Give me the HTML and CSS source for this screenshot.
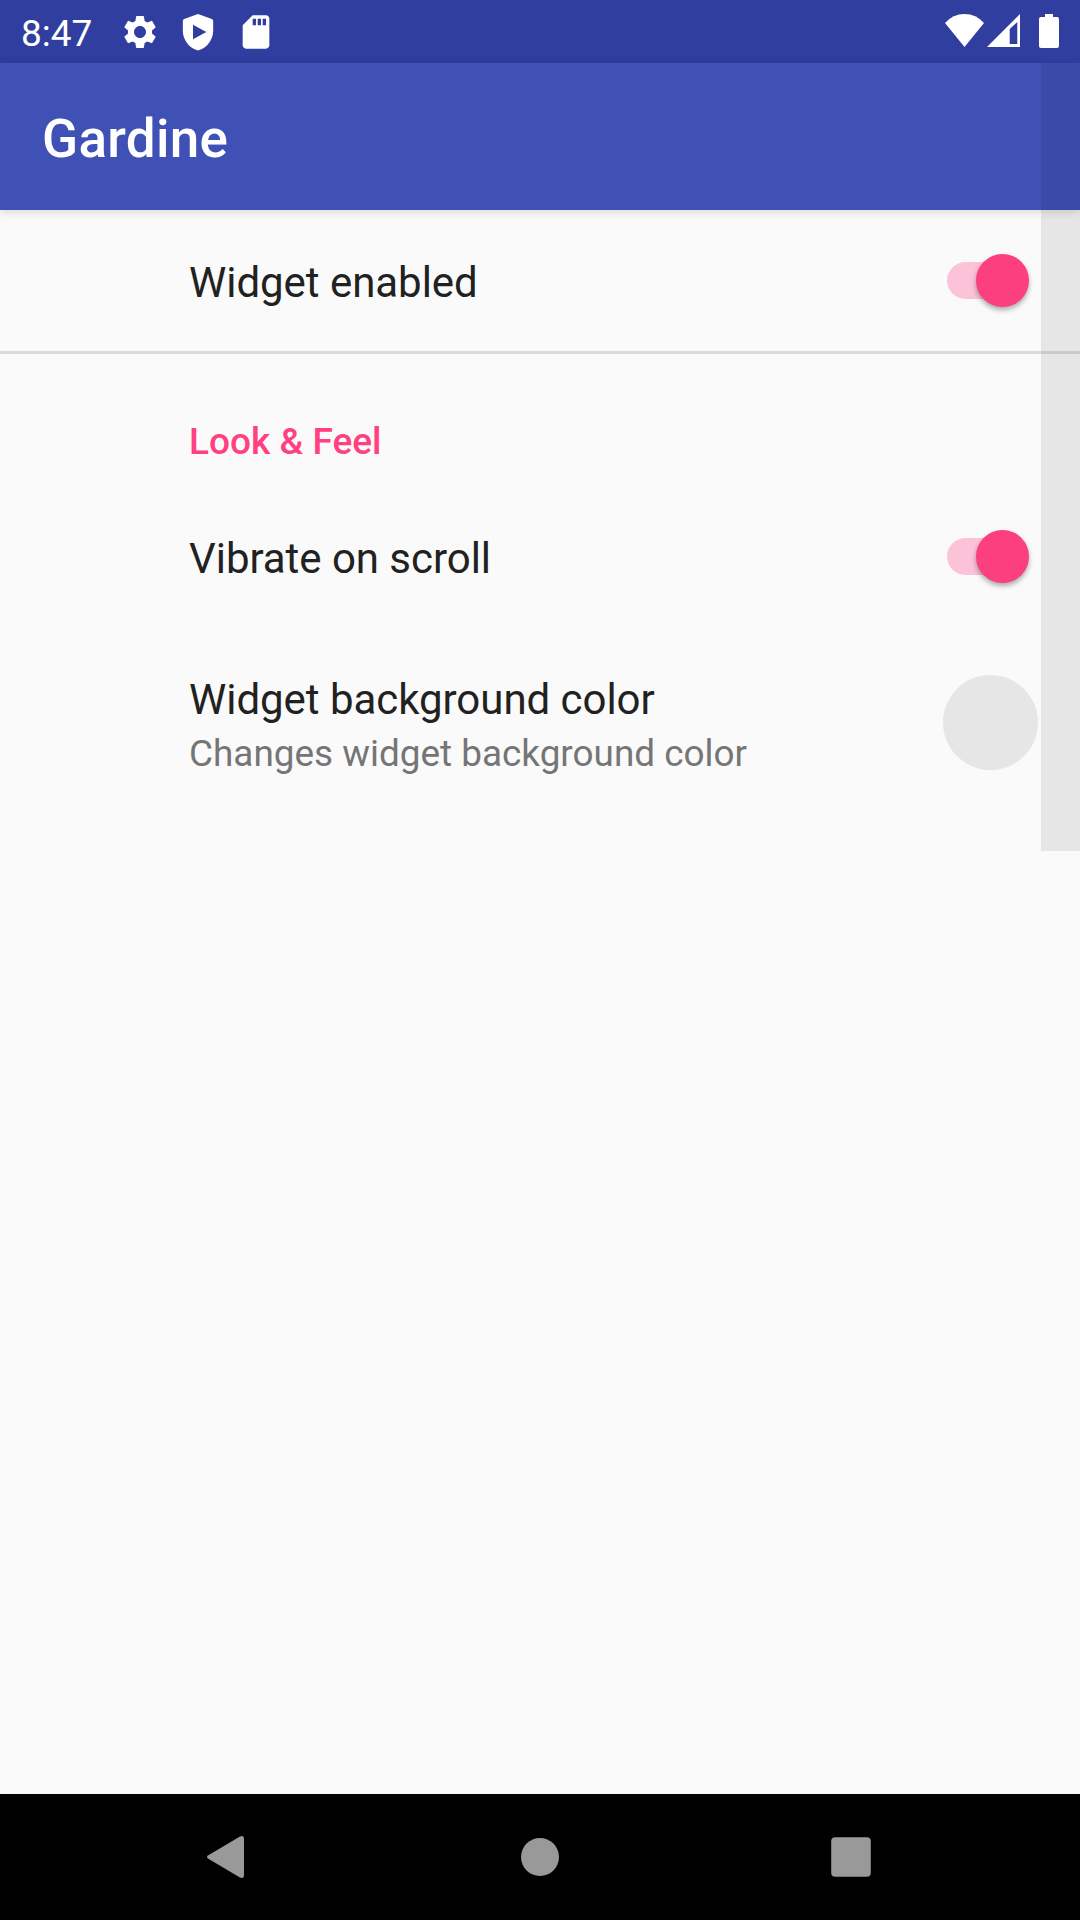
FILE: index.html
```
<!DOCTYPE html>
<html lang="en">
<head>
<meta charset="utf-8">
<title>Gardine</title>
<link rel="stylesheet" href="styles.css">
</head>
<body>
<div class="screen">
  <header class="status-bar">
    <span class="clock">8:47</span>
    <div class="notifications">
      <svg class="status-icon" viewBox="0 0 24 24"><path d="M19.14 12.94c.04-.3.06-.61.06-.94 0-.32-.02-.64-.07-.94l2.03-1.58c.18-.14.23-.41.12-.61l-1.92-3.32c-.12-.22-.37-.29-.59-.22l-2.39.96c-.5-.38-1.03-.7-1.62-.94l-.36-2.54c-.04-.24-.24-.41-.48-.41h-3.84c-.24 0-.43.17-.47.41l-.36 2.54c-.59.24-1.13.57-1.62.94l-2.39-.96c-.22-.08-.47 0-.59.22L2.74 8.87c-.12.21-.08.47.12.61l2.03 1.58c-.05.3-.09.63-.09.94s.02.64.07.94l-2.03 1.58c-.18.14-.23.41-.12.61l1.92 3.32c.12.22.37.29.59.22l2.39-.96c.5.38 1.03.7 1.62.94l.36 2.54c.05.24.24.41.48.41h3.84c.24 0 .44-.17.47-.41l.36-2.54c.59-.24 1.13-.56 1.62-.94l2.39.96c.22.08.47 0 .59-.22l1.92-3.32c.12-.22.07-.47-.12-.61l-2.01-1.58zM12 15.6c-1.98 0-3.6-1.62-3.6-3.6s1.62-3.6 3.6-3.6 3.6 1.62 3.6 3.6-1.62 3.6-3.6 3.6z"/></svg>
      <svg class="status-icon" viewBox="0 0 24 24"><path fill-rule="evenodd" d="M12 1.2L3.7 4.2Q2.9 4.5 2.9 5.4V11.2C2.9 16.6 6.6 21.2 11 22.8Q12 23.2 13 22.8C17.4 21.2 21.1 16.6 21.1 11.2V5.4Q21.1 4.5 20.3 4.2ZM9 7.7V16.3L17 12Z"/></svg>
      <svg class="status-icon" viewBox="0 0 24 24"><path d="M18 2h-8L4.02 8 4 20c0 1.1.9 2 2 2h12c1.1 0 2-.9 2-2V4c0-1.1-.9-2-2-2zm-6 6h-2V4h2v4zm3 0h-2V4h2v4zm3 0h-2V4h2v4z"/></svg>
    </div>
    <div class="system-icons">
      <svg class="wifi" viewBox="0 0 39 33"><path d="M19.5 33L0 9Q8 0 19.5 0T39 9Z"/></svg>
      <svg class="signal" viewBox="0 0 33 33"><path fill-rule="evenodd" d="M33 0V33H0ZM30.3 8L22.7 15V30H30.3Z"/></svg>
      <svg class="battery" viewBox="0 0 20 34"><path d="M6 0H14V3H18Q20 3 20 5V32Q20 34 18 34H2Q0 34 0 32V5Q0 3 2 3H6Z"/></svg>
    </div>
  </header>
  <div class="app-bar"><h1 class="title">Gardine</h1></div>
  <main class="settings">
    <section class="group first-group">
      <div class="row">
        <div class="label">Widget enabled</div>
        <div class="switch"><div class="thumb"></div></div>
      </div>
    </section>
    <section class="group">
      <h2 class="category">Look &amp; Feel</h2>
      <div class="row">
        <div class="label">Vibrate on scroll</div>
        <div class="switch"><div class="thumb"></div></div>
      </div>
      <div class="row color-row">
        <div class="text">
          <div class="label">Widget background color</div>
          <div class="summary">Changes widget background color</div>
        </div>
        <div class="swatch"></div>
      </div>
    </section>
  </main>
  <nav class="nav-bar">
    <svg class="nav-icon" viewBox="0 0 48 48"><path d="M3.3 22.2L35 3.4Q39 1.8 39 6V42Q39 46.2 35 44.6L3.3 25.8Q.7 24 3.3 22.2Z"/></svg>
    <svg class="nav-icon" viewBox="0 0 48 48"><circle cx="24" cy="24" r="19"/></svg>
    <svg class="nav-icon" viewBox="0 0 48 48"><rect x="4.2" y="4.2" width="39.6" height="39.6" rx="4"/></svg>
  </nav>
  <div class="widget-handle"></div>
</div>
</body>
</html>
```
FILE: styles.css
```
* { box-sizing: border-box; }

body {
  margin: 0;
  font-family: Roboto, "Noto Sans", sans-serif;
  background: #fafafa;
}

h1, h2 { margin: 0; }

.screen {
  position: relative;
  display: flex;
  flex-direction: column;
  width: 1080px;
  height: 1920px;
  overflow: hidden;
}

.status-bar {
  display: flex;
  align-items: center;
  height: 63px;
  padding: 0 21px;
  background: #303f9f;
  color: #fff;
  fill: #fff;
}

.clock {
  width: 99px;
  padding-top: 4px;
  font-size: 37px;
  line-height: 44px;
}

.notifications {
  display: flex;
  gap: 18px;
}

.status-icon {
  width: 40px;
  height: 40px;
}

.system-icons {
  display: flex;
  align-items: flex-start;
  height: 35px;
  margin-left: auto;
}

.wifi { width: 39px; height: 33px; }
.signal { width: 33px; height: 33px; margin-left: 3px; }
.battery { width: 20px; height: 34px; margin-left: 19px; }

.app-bar {
  z-index: 1;
  height: 147px;
  padding: 45px 42px 0;
  background: #3f51b5;
  box-shadow: 0 2px 9px rgba(0, 0, 0, 0.14);
}

.title {
  color: #fff;
  font-size: 53px;
  font-weight: 500;
  line-height: 62px;
  letter-spacing: 0.3px;
}

.settings {
  flex: 1;
  color: #212121;
}

.first-group { border-bottom: 3px solid #dcdcdc; }

.row {
  display: flex;
  align-items: center;
  justify-content: space-between;
  height: 141px;
  padding: 0 42px 0 189px;
}

.label {
  padding-top: 5px;
  font-size: 42px;
  line-height: 50px;
  letter-spacing: -0.04px;
}

.category {
  height: 132px;
  padding: 66px 0 0 189px;
  color: #ff4081;
  font-size: 37px;
  font-weight: 500;
  line-height: 44px;
}

.switch {
  display: flex;
  align-items: center;
  justify-content: flex-end;
  width: 73px;
  height: 37px;
  margin-right: 18px;
  border-radius: 19px;
  background: #fcc2d7;
}

.thumb {
  flex: none;
  width: 53px;
  height: 53px;
  margin-right: -9px;
  border-radius: 50%;
  background: #fb3f7f;
  box-shadow: 0 3px 5px rgba(0, 0, 0, 0.32);
}

.color-row { height: 191px; }

.summary {
  padding-top: 7px;
  color: #757575;
  font-size: 36.9px;
  line-height: 44px;
}

.swatch {
  width: 95px;
  height: 95px;
  border-radius: 50%;
  background: #e6e6e6;
}

.nav-bar {
  display: flex;
  align-items: center;
  justify-content: center;
  gap: 263px;
  height: 126px;
  background: #000;
  fill: #999;
}

.nav-icon { width: 48px; height: 48px; }

/* Translucent touch strip laid over the app by the widget */
.widget-handle {
  position: absolute;
  z-index: 2;
  top: 63px;
  right: 0;
  width: 39px;
  height: 788px;
  background: rgba(0, 0, 0, 0.08);
}
```
